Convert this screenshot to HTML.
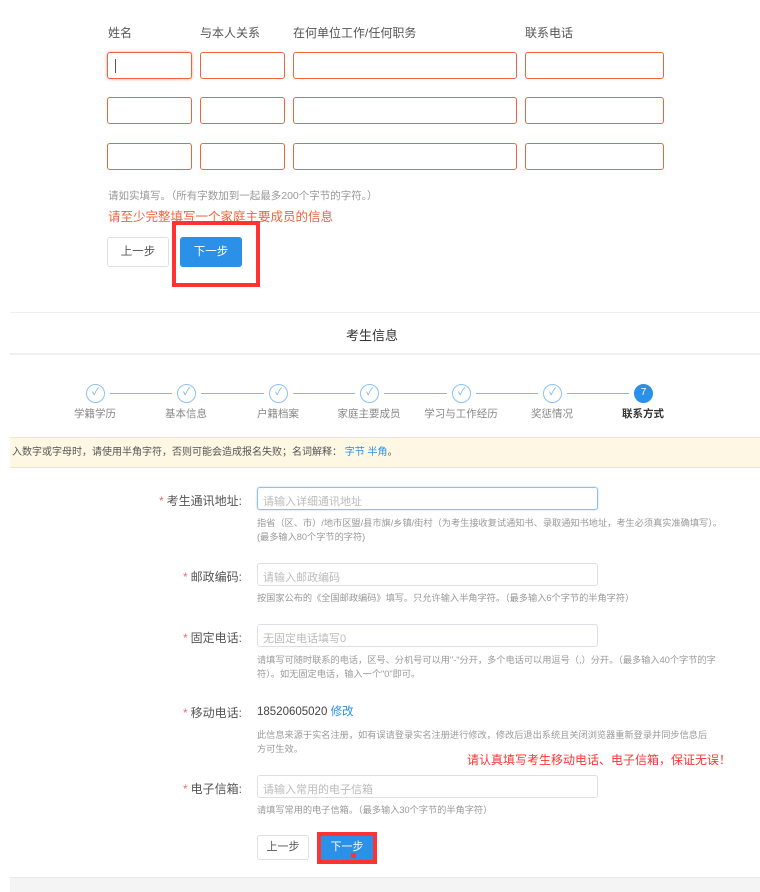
<!DOCTYPE html>
<html><head><meta charset="utf-8"><style>
*{margin:0;padding:0;box-sizing:border-box}
body{width:760px;height:892px;background:#fff;position:relative;overflow:hidden;font-family:"Liberation Sans","Noto Sans CJK SC",sans-serif;color:#333}
.a{position:absolute;white-space:nowrap}
.in{position:absolute;border:1px solid #f0643f;border-radius:3px;background:#fff;height:27px}
.fi{position:absolute;left:257px;width:341px;height:23px;border:1px solid #dcdfe6;border-radius:3px;font-size:11px;color:#bbb;padding:5px 0 0 5px}
.lb{position:absolute;right:518px;font-size:12px;color:#555;white-space:nowrap}
.lb b{color:#f56c6c;font-weight:normal;margin-right:3px}
.h{position:absolute;left:257px;font-size:9.2px;color:#999;line-height:14px;width:470px}
.c{position:absolute;width:19px;height:19px;border:1.5px solid #8cc2f2;border-radius:50%;color:#6ab0ee;font-size:10px;text-align:center;line-height:16px;top:384px}
.ln{position:absolute;height:1px;background:#7db9ef;top:393px}
.sl{position:absolute;top:406px;font-size:10.5px;color:#888;width:100px;text-align:center}
</style></head><body>
<div class="a" style="left:108px;top:24px;font-size:12px;color:#555">姓名</div>
<div class="a" style="left:200px;top:24px;font-size:12px;color:#555">与本人关系</div>
<div class="a" style="left:293px;top:24px;font-size:12px;color:#555">在何单位工作/任何职务</div>
<div class="a" style="left:525px;top:24px;font-size:12px;color:#555">联系电话</div>

<div class="in" style="left:107px;top:52px;width:85px;box-shadow:0 0 3px #f5a58f"><div style="position:absolute;left:7px;top:6px;width:1px;height:14px;background:#555"></div></div>
<div class="in" style="left:200px;top:52px;width:85px"></div>
<div class="in" style="left:293px;top:52px;width:224px"></div>
<div class="in" style="left:525px;top:52px;width:139px"></div>
<div class="in" style="left:107px;top:97px;width:85px"></div>
<div class="in" style="left:200px;top:97px;width:85px"></div>
<div class="in" style="left:293px;top:97px;width:224px"></div>
<div class="in" style="left:525px;top:97px;width:139px"></div>
<div class="in" style="left:107px;top:143px;width:85px"></div>
<div class="in" style="left:200px;top:143px;width:85px"></div>
<div class="in" style="left:293px;top:143px;width:224px"></div>
<div class="in" style="left:525px;top:143px;width:139px"></div>

<div class="a" style="left:108px;top:188px;font-size:10.5px;color:#999">请如实填写。（所有字数加到一起最多200个字节的字符。）</div>
<div class="a" style="left:108px;top:206px;font-size:12.5px;color:#f0643f">请至少完整填写一个家庭主要成员的信息</div>
<div class="a" style="left:107px;top:237px;width:62px;height:30px;border:1px solid #dcdfe6;border-radius:3px;font-size:11.5px;text-align:center;line-height:28px;color:#555">上一步</div>
<div class="a" style="left:172px;top:221px;width:88px;height:66px;border:4px solid #ff3333"></div>
<div class="a" style="left:180px;top:237px;width:62px;height:30px;background:#2b90e8;border-radius:3px;font-size:11.5px;text-align:center;line-height:30px;color:#fff">下一步</div>

<div class="a" style="left:10px;top:312px;width:750px;height:1px;background:#eee"></div>
<div class="a" style="left:346px;top:325px;font-size:13px;color:#333">考生信息</div>
<div class="a" style="left:10px;top:353px;width:750px;height:2px;background:#f0f0f0"></div>

<div class="c" style="left:86px">✓</div><div class="c" style="left:177px">✓</div><div class="c" style="left:269px">✓</div><div class="c" style="left:360px">✓</div><div class="c" style="left:452px">✓</div><div class="c" style="left:543px">✓</div>
<div class="c" style="left:634px;background:#2b90e8;border-color:#2b90e8;color:#fff">7</div>
<div class="ln" style="left:110px;width:62px"></div><div class="ln" style="left:201px;width:63px"></div><div class="ln" style="left:293px;width:62px"></div><div class="ln" style="left:384px;width:63px"></div><div class="ln" style="left:476px;width:62px"></div><div class="ln" style="left:567px;width:62px"></div>
<div class="sl" style="left:45px">学籍学历</div><div class="sl" style="left:136px">基本信息</div><div class="sl" style="left:228px">户籍档案</div><div class="sl" style="left:319px">家庭主要成员</div><div class="sl" style="left:411px">学习与工作经历</div><div class="sl" style="left:502px">奖惩情况</div><div class="sl" style="left:593px;color:#333;font-weight:bold">联系方式</div>

<div class="a" style="left:10px;top:437px;width:750px;height:31px;background:#fdf7e4;border-top:1px solid #f8e6b1;border-bottom:1px solid #f8e6b1;font-size:10px;color:#555;line-height:29px;padding-left:2px">入数字或字母时，请使用半角字符，否则可能会造成报名失败；名词解释： <span style="color:#2b90e8">字节 半角</span>。</div>

<div class="lb" style="top:492px"><b>*</b>考生通讯地址:</div>
<div class="fi" style="top:487px;border-color:#8fc1f0;box-shadow:0 0 2px #b8d9f7">请输入详细通讯地址</div>
<div class="h" style="top:516px;white-space:nowrap">指省（区、市）/地市区盟/县市旗/乡镇/街村（为考生接收复试通知书、录取通知书地址，考生必须真实准确填写）。<br>(最多输入80个字节的字符)</div>

<div class="lb" style="top:568px"><b>*</b>邮政编码:</div>
<div class="fi" style="top:563px">请输入邮政编码</div>
<div class="h" style="top:591px">按国家公布的《全国邮政编码》填写。只允许输入半角字符。（最多输入6个字节的半角字符）</div>

<div class="lb" style="top:629px"><b>*</b>固定电话:</div>
<div class="fi" style="top:624px">无固定电话填写0</div>
<div class="h" style="top:653px;width:462px">请填写可随时联系的电话，区号、分机号可以用"-"分开，多个电话可以用逗号（,）分开。（最多输入40个字节的字符）。如无固定电话，输入一个"0"即可。</div>

<div class="lb" style="top:704px"><b>*</b>移动电话:</div>
<div class="a" style="left:257px;top:703px;font-size:11.5px;color:#444">18520605020 <span style="color:#2b90e8">修改</span></div>
<div class="h" style="top:728px;width:455px">此信息来源于实名注册，如有误请登录实名注册进行修改，修改后退出系统且关闭浏览器重新登录并同步信息后方可生效。</div>
<div class="a" style="left:467px;top:751px;font-size:12px;color:#ff3333">请认真填写考生移动电话、电子信箱，保证无误！</div>

<div class="lb" style="top:780px"><b>*</b>电子信箱:</div>
<div class="fi" style="top:775px">请输入常用的电子信箱</div>
<div class="h" style="top:803px">请填写常用的电子信箱。（最多输入30个字节的半角字符）</div>

<div class="a" style="left:257px;top:835px;width:52px;height:25px;border:1px solid #dcdfe6;border-radius:3px;font-size:11px;text-align:center;line-height:23px;color:#555">上一步</div>
<div class="a" style="left:317px;top:832px;width:60px;height:32px;border:4px solid #ff3333"></div>
<div class="a" style="left:321px;top:836px;width:52px;height:24px;background:#2b90e8;font-size:11px;text-align:center;line-height:23px;color:#fff">下一步</div>
<div class="a" style="left:351px;top:853px;width:5px;height:5px;background:#ff3333"></div>
<div class="a" style="left:10px;top:877px;width:750px;height:15px;background:#f4f4f4;border-top:1px solid #eaeaea"></div>
</body></html>
